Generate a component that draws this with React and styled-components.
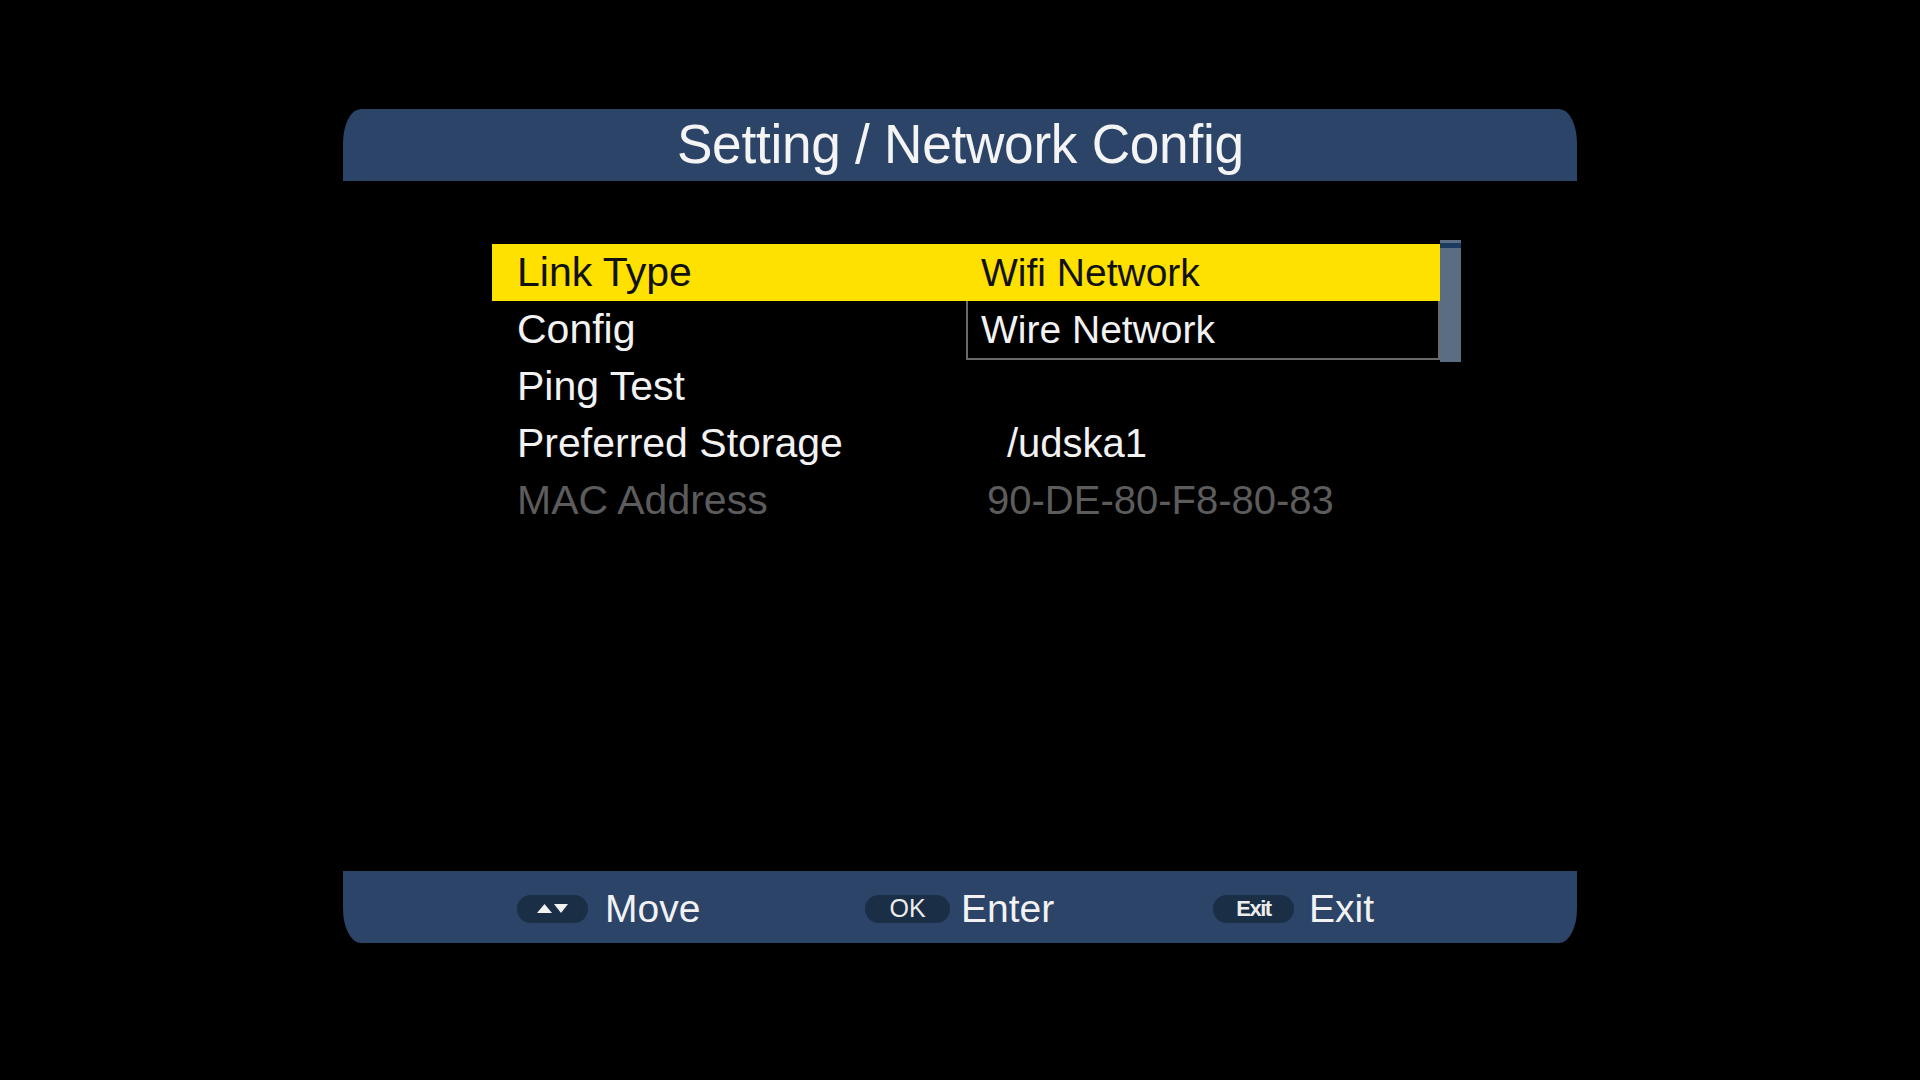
import styled, { createGlobalStyle } from 'styled-components';

const GlobalStyle = createGlobalStyle`
  html, body {
    margin: 0;
    padding: 0;
    background: #000;
  }
  body {
    font-family: "Liberation Sans", Arial, sans-serif;
  }
`;

const menuItems = [
  { label: 'Link Type', value: null },
  { label: 'Config', value: null },
  { label: 'Ping Test', value: null },
  { label: 'Preferred Storage', value: '/udska1', indent: 41 },
  { label: 'MAC Address', value: '90-DE-80-F8-80-83', indent: 21, disabled: true },
];

const linkOptions = ['Wifi Network', 'Wire Network'];

const ArrowsIcon = () => (
  <svg width="33" height="11" viewBox="0 0 33 11">
    <polygon points="1,10 8.5,1 16,10" fill="#f2f2f2" />
    <polygon points="18,1 32,1 25,10" fill="#f2f2f2" />
  </svg>
);

const App = () => {
  return (
    <Screen>
      <GlobalStyle />
      <Panel>
        <Header>
          <Title>Setting / Network Config</Title>
        </Header>

        <Body>
          <Menu>
            {menuItems.map((item, i) => (
              <Row key={item.label} $active={i === 0} $disabled={item.disabled}>
                <Label>{item.label}</Label>
                {item.value && <Value $indent={item.indent}>{item.value}</Value>}
              </Row>
            ))}

            <DropDown>
              <DropList>
                {linkOptions.map((opt, i) => (
                  <Option key={opt} $selected={i === 0}>
                    {opt}
                  </Option>
                ))}
              </DropList>
              <ScrollBar>
                <Thumb />
              </ScrollBar>
            </DropDown>
          </Menu>
        </Body>

        <Footer>
          <HintItem $gap={17}>
            <KeyPill $width={71}>
              <ArrowsIcon />
            </KeyPill>
            <HintText>Move</HintText>
          </HintItem>
          <HintItem $gap={11}>
            <KeyPill $width={85}>OK</KeyPill>
            <HintText>Enter</HintText>
          </HintItem>
          <HintItem $gap={15}>
            <KeyPill $width={81} $small>
              Exit
            </KeyPill>
            <HintText>Exit</HintText>
          </HintItem>
        </Footer>
      </Panel>
    </Screen>
  );
};

const Screen = styled.div`
  width: 1920px;
  height: 1080px;
  background: #000;
  padding-top: 109px;
  box-sizing: border-box;
  overflow: hidden;
`;

const Panel = styled.div`
  width: 1234px;
  margin: 0 auto;
  display: flex;
  flex-direction: column;
`;

const Header = styled.header`
  height: 72px;
  background: #2c4468;
  border-radius: 18px 18px 0 0 / 34px 34px 0 0;
  display: flex;
  align-items: center;
  justify-content: center;
  padding-bottom: 4px;
  box-sizing: border-box;
`;

const Title = styled.h1`
  margin: 0;
  font-size: 56px;
  font-weight: normal;
  color: #f4f4f4;
  letter-spacing: -0.3px;
  transform: scaleX(0.95);
`;

const Body = styled.main`
  height: 690px;
  padding: 63px 0 0 149px;
  box-sizing: border-box;
`;

const Menu = styled.div`
  position: relative;
  width: 948px;
  display: flex;
  flex-direction: column;
`;

const Row = styled.div`
  height: 57px;
  display: grid;
  grid-template-columns: 474px 1fr;
  align-items: center;
  background: ${({ $active }) => ($active ? '#ffe100' : 'transparent')};
  color: ${({ $active, $disabled }) =>
    $active ? '#111' : $disabled ? '#5c5c5c' : '#f2f2f2'};
`;

const Label = styled.span`
  padding-left: 25px;
  font-size: 41px;
  white-space: nowrap;
`;

const Value = styled.span`
  padding-left: ${({ $indent }) => $indent || 0}px;
  font-size: 40px;
  white-space: nowrap;
`;

const DropDown = styled.div`
  position: absolute;
  top: -4px;
  left: 474px;
  height: 122px;
  display: flex;
`;

const DropList = styled.div`
  width: 470px;
  margin-top: 4px;
  background: #000;
  border: 2px solid #6a6a6a;
  border-top: none;
  align-self: flex-start;
`;

const Option = styled.div`
  height: 57px;
  display: flex;
  align-items: center;
  font-size: 39px;
  white-space: nowrap;
  margin: ${({ $selected }) => ($selected ? '0 -2px 0 -2px' : '0')};
  padding-left: ${({ $selected }) => ($selected ? '15px' : '13px')};
  background: ${({ $selected }) => ($selected ? '#ffe100' : '#000')};
  color: ${({ $selected }) => ($selected ? '#111' : '#f2f2f2')};
`;

const ScrollBar = styled.div`
  width: 21px;
  background: #5b6d81;
  padding-top: 3px;
  box-sizing: border-box;
`;

const Thumb = styled.div`
  height: 5px;
  background: #1b3a60;
`;

const Footer = styled.footer`
  height: 72px;
  background: #2c4468;
  border-radius: 0 0 18px 18px / 0 0 34px 34px;
  display: flex;
  align-items: center;
  padding: 3px 0 0 174px;
  box-sizing: border-box;
`;

const HintItem = styled.div`
  width: 348px;
  display: flex;
  align-items: center;
  gap: ${({ $gap }) => $gap}px;
`;

const KeyPill = styled.span`
  width: ${({ $width }) => $width}px;
  height: 28px;
  border-radius: 14px;
  background: #1a2e45;
  display: flex;
  align-items: center;
  justify-content: center;
  color: #ececec;
  font-size: ${({ $small }) => ($small ? '22px' : '25px')};
  font-weight: ${({ $small }) => ($small ? 'bold' : 'normal')};
  letter-spacing: ${({ $small }) => ($small ? '-1.5px' : '0')};
`;

const HintText = styled.span`
  font-size: 39px;
  color: #f2f2f2;
`;

export default App;
